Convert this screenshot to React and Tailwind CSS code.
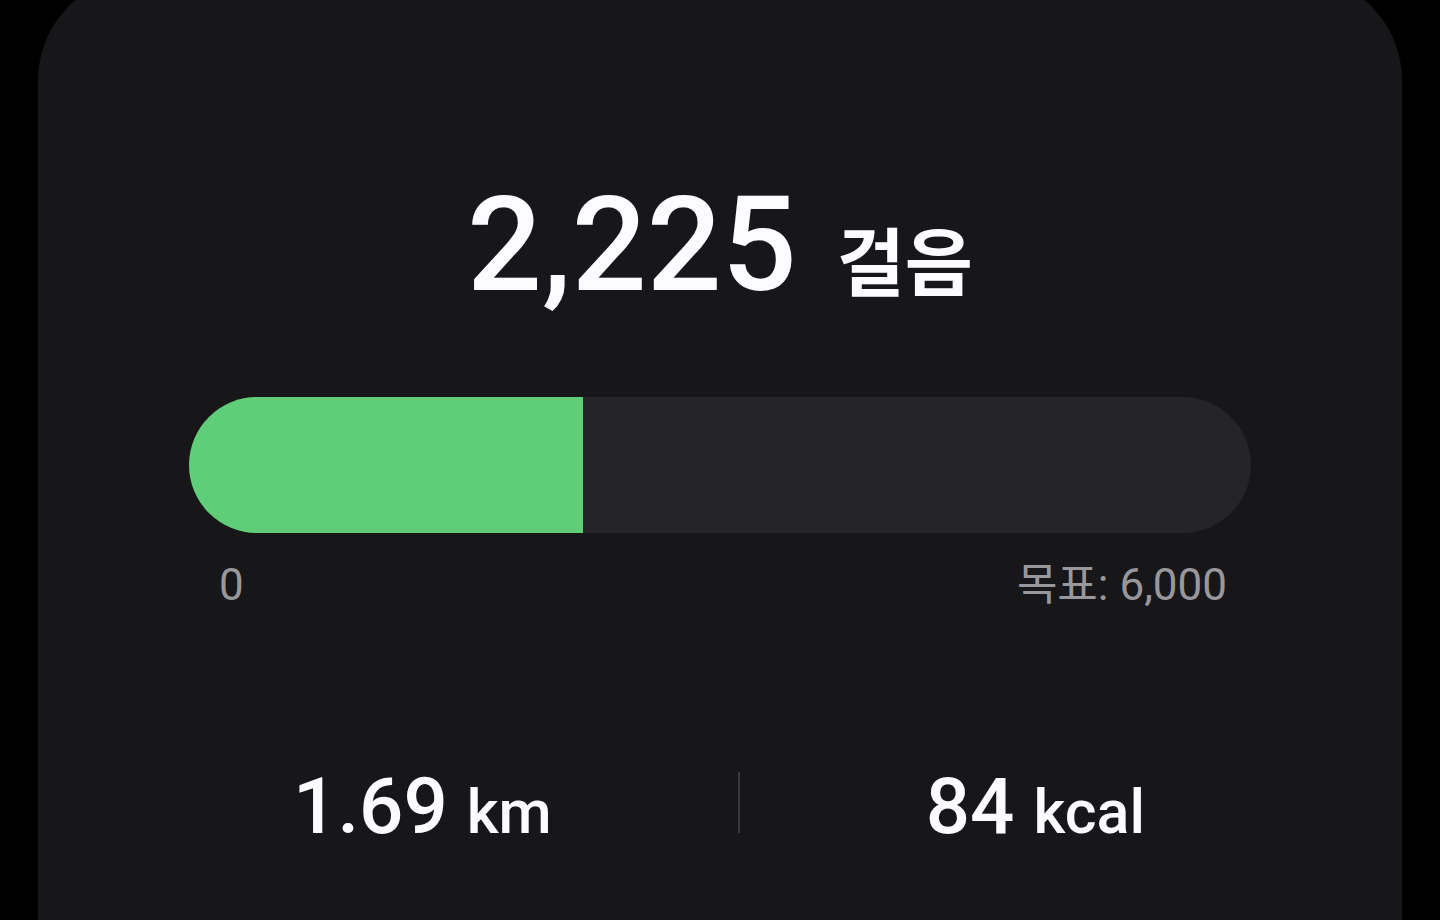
const steps = 2225
const goal = 6000

const stats = [
  { value: "1.69", unit: "km" },
  { value: "84", unit: "kcal" },
]

const App = () => {
  const percent = (steps / goal) * 100

  return (
    <main className="flex min-h-screen overflow-hidden bg-black px-[38px] font-[Roboto,'Noto_Sans_CJK_KR',sans-serif] text-[#fcfbff]">
      <section className="-mt-6 w-full rounded-t-[104px] bg-[#171719] pt-[193px] pb-16">
        <h1 className="flex items-baseline justify-center gap-10 font-medium leading-[152px]">
          <span className="text-[132px]">{steps.toLocaleString("en-US")}</span>
          <span className="text-[74px] font-bold">걸음</span>
        </h1>

        {/* progress */}
        <div className="mx-[151px] mt-14">
          <div
            role="progressbar"
            aria-label="걸음"
            aria-valuenow={steps}
            aria-valuemin={0}
            aria-valuemax={goal}
            className="h-[136px] overflow-hidden rounded-full bg-[#252527]"
          >
            <div className="h-full bg-[#60ce78]" style={{ width: `${percent}%` }}></div>
          </div>
          <div className="mt-6 flex justify-between pr-6 pl-[30px] text-[44px] leading-[56px] text-[#98979c]">
            <span>0</span>
            <span>목표: {goal.toLocaleString("en-US")}</span>
          </div>
        </div>

        {/* distance and calories */}
        <div className="mt-[150px] flex items-baseline pr-[71px] pl-[69px] font-medium leading-[88px]">
          <p className="flex flex-auto items-baseline justify-center gap-[19px]">
            <span className="text-[78px]">{stats[0].value}</span>
            <span className="text-[61px]">{stats[0].unit}</span>
          </p>
          <div className="h-[61px] w-[2px] bg-[#3a3a3c]"></div>
          <p className="flex flex-auto items-baseline justify-center gap-[19px]">
            <span className="text-[78px]">{stats[1].value}</span>
            <span className="text-[61px]">{stats[1].unit}</span>
          </p>
        </div>
      </section>
    </main>
  )
}

export default App
